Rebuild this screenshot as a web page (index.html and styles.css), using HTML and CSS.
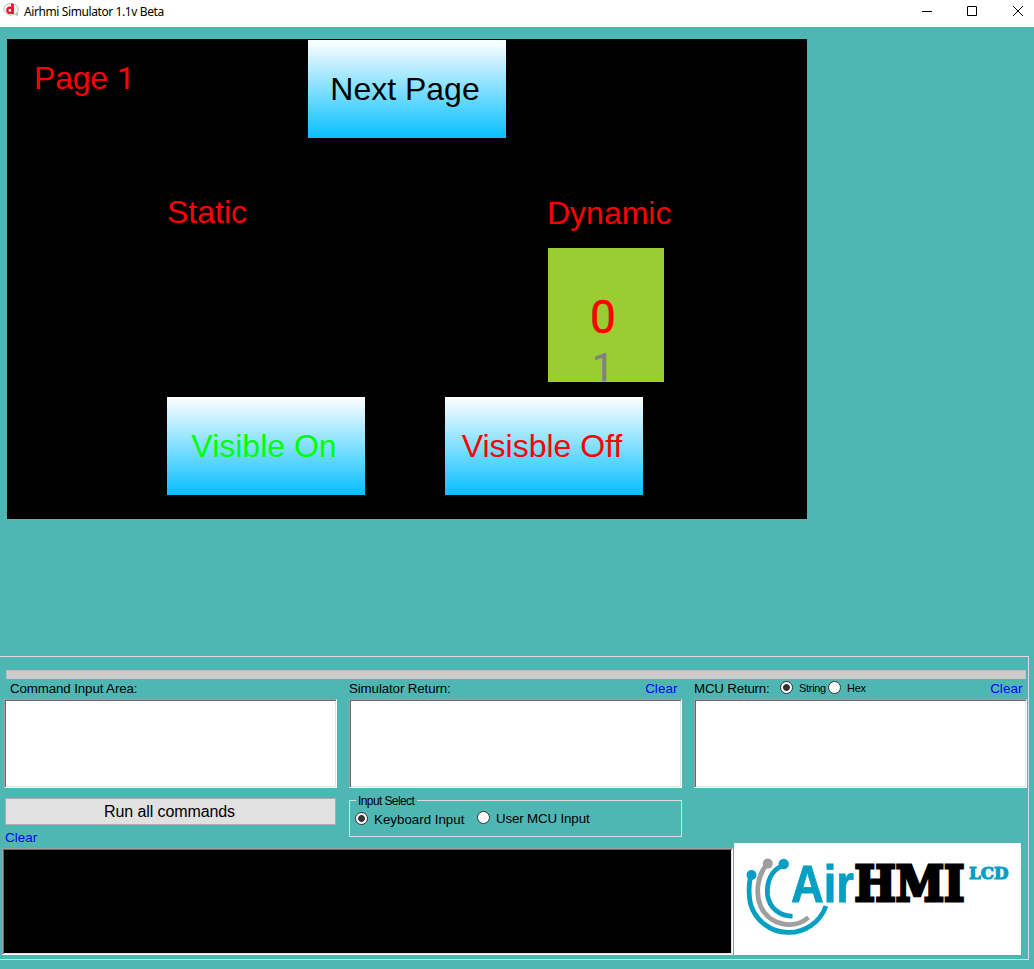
FILE: index.html
```html
<!DOCTYPE html>
<html lang="en">
<head>
<meta charset="utf-8">
<title>Airhmi Simulator 1.1v Beta</title>
<link rel="stylesheet" href="styles.css">
</head>
<body>
<header class="titlebar">
  <svg class="app-icon" viewBox="0 0 16 16" width="16" height="16"><path d="M12 12 15 14.500 14.500 10z" fill="#aaa"/><ellipse cx="8" cy="7.300" rx="7.300" ry="5.800" fill="#f4f4f4" stroke="#c0c0c0"/><path d="M9.700 2V12M8 2.800H10" stroke="#e3142a" stroke-width="2.400" fill="none"/><ellipse cx="7" cy="8.300" rx="2.700" ry="2.600" fill="none" stroke="#e3142a" stroke-width="2.200"/></svg>
  <span class="app-name">Airhmi Simulator 1.1v Beta</span>
  <div class="window-controls">
    <svg viewBox="0 0 12 12" width="12" height="12"><path d="M2 6.500h10" class="glyph"/></svg>
    <svg viewBox="0 0 12 12" width="12" height="12"><path d="M1.500 1.500h9v9h-9z" class="glyph"/></svg>
    <svg viewBox="0 0 12 12" width="12" height="12"><path d="M1 1l10 10M11 1 1 11" class="glyph"/></svg>
  </div>
</header>
<main>
  <section class="screen">
    <span class="label page-label">Page <span class="digit">1</span></span>
    <button class="hmi-button next">Next Page</button>
    <span class="label static-label">Static</span>
    <span class="label dynamic-label">Dynamic</span>
    <div class="picker"><span class="current">0</span><span class="following">1</span></div>
    <button class="hmi-button on">Visible On</button>
    <button class="hmi-button off">Visisble Off</button>
  </section>
  <section class="panel">
    <div class="progress"></div>
    <div class="columns">
      <div class="column">
        <div class="column-head command-head"><span>Command Input Area:</span></div>
        <div class="textbox"></div>
      </div>
      <div class="column">
        <div class="column-head"><span>Simulator Return:</span><a class="clear">Clear</a></div>
        <div class="textbox"></div>
      </div>
      <div class="column">
        <div class="column-head"><span class="mcu">MCU Return:</span><i class="radio checked"></i><span class="small string">String</span><i class="radio"></i><span class="small hex">Hex</span><a class="clear">Clear</a></div>
        <div class="textbox"></div>
      </div>
    </div>
    <div class="actions">
      <div class="run-area">
        <button class="run">Run all commands</button>
        <a class="clear console-clear">Clear</a>
      </div>
      <div class="input-select">
        <span class="legend">Input Select</span>
        <i class="radio checked"></i><span class="keyboard">Keyboard Input</span><i class="radio user-radio"></i><span class="user">User MCU Input</span>
      </div>
    </div>
    <div class="bottom">
      <div class="console"></div>
      <svg class="logo" viewBox="734 843 287 112" width="287" height="112">
        <g fill="none" stroke="#049fc3" stroke-width="4.800">
          <path d="M750.800 875Q747.500 890 750.500 904A39.700 39.700 0 0 0 826 906"/>
          <path d="M783 865.500C771 870 766.500 882 767.500 895A24 24 0 0 0 792.500 916"/>
          <path stroke="#a09f9e" d="M767 864C757 876 755.500 894 760.500 906A31 31 0 0 0 808.500 917.500"/>
        </g>
        <circle cx="751.500" cy="875" r="5" fill="#049fc3"/>
        <circle cx="767.800" cy="863.600" r="5" fill="#a09f9e"/>
        <circle cx="783.700" cy="864" r="5.200" fill="#049fc3"/>
        <text class="air" x="791" y="902" textLength="63" lengthAdjust="spacingAndGlyphs">Air</text>
        <text class="hmi" x="854.500" y="901" textLength="110" lengthAdjust="spacingAndGlyphs">HMI</text>
        <text class="lcd" x="969" y="879.300" textLength="39.500" lengthAdjust="spacingAndGlyphs">LCD</text>
      </svg>
    </div>
  </section>
</main>
</body>
</html>
```
FILE: styles.css
```css
* { box-sizing: border-box; }
body { margin: 0; width: 1034px; height: 969px; overflow: hidden; background: #4eb6b3; font: 13.33px/16px "Liberation Sans", Arial, sans-serif; color: #000; }
.titlebar { height: 27px; background: #fff; display: flex; align-items: flex-start; padding-left: 3px; }
.app-icon { margin-top: 2px; }
.app-name { margin: 4px 0 0 5px; font: 12px/16px "Noto Sans", sans-serif; letter-spacing: -0.4px; white-space: nowrap; }
.window-controls { margin: 5px 10px 0 auto; display: flex; gap: 34px; }
.glyph { fill: none; stroke: #000; stroke-width: 1; }
main { padding-top: 12px; }
button { font-family: inherit; padding: 0; }

.screen { position: relative; width: 800px; height: 480px; margin-left: 7px; background: #000; font-size: 32px; line-height: 36px; }
.label { position: absolute; color: #f00; white-space: nowrap; }
.page-label { left: 27px; top: 21px; letter-spacing: -0.2px; }
.digit { font-family: Roboto, sans-serif; }
.static-label { left: 160px; top: 155px; }
.dynamic-label { left: 540px; top: 156px; }
.hmi-button { position: absolute; width: 198px; height: 98px; border: 0; background: linear-gradient(#fff, #06bfff); font-size: 32px; line-height: 36px; white-space: nowrap; }
.next { left: 301px; top: 1px; padding-right: 4px; }
.on { left: 160px; top: 358px; color: #0f0; padding-right: 4px; }
.off { left: 438px; top: 358px; color: #f00; padding-right: 4px; }
.picker { position: absolute; left: 541px; top: 209px; width: 116px; height: 134px; overflow: hidden; background: #9acd32; }
.current, .following { position: absolute; left: 0; width: 110px; text-align: center; }
.current { top: 43px; color: #f00; font: 400 46px/52px Roboto, sans-serif; -webkit-text-stroke: 0.5px #f00; }
.following { top: 105px; color: #808080; font: 39px/30px Roboto, sans-serif; -webkit-text-stroke: 0.4px #808080; }

.panel { width: 1029px; height: 304px; margin-top: 137px; border: 1px solid #dcdcdc; border-left: 0; padding: 13px 0 0 4px; }
.progress { width: 1020px; height: 9px; margin-left: 2px; background: #ccc; border: 1px solid #bcbcbc; border-bottom: 0; border-right-color: #c4c4c4; }
.columns { display: flex; gap: 12px; }
.column { width: 333px; }
.column-head { height: 20px; display: flex; align-items: flex-start; padding-top: 2px; white-space: nowrap; letter-spacing: -0.12px; }
.command-head { padding-left: 6px; }
.clear { color: #00f; margin-left: auto; padding-right: 4.500px; letter-spacing: 0.1px; }
.textbox, .console { border: 1px solid; border-color: #a0a0a0 #fff #fff #a0a0a0; background: #fff; box-shadow: inset 1px 1px #696969, inset -1px -1px #e3e3e3; }
.textbox { height: 89px; }
.radio { flex: none; width: 13px; height: 13px; border: 1px solid #333; border-radius: 50%; background: #fff; }
.checked { background: radial-gradient(circle, #333 0 3px, #fff 3.800px); }
.small { font-size: 11px; letter-spacing: -0.3px; line-height: 14px; }
.mcu { width: 86px; letter-spacing: -0.2px; }
.string { width: 29px; margin: 0 0 0 6px; }
.hex { margin-left: 6px; }

.actions { display: flex; height: 60px; padding-top: 10px; }
.run-area { width: 345px; display: flex; flex-direction: column; align-items: flex-start; }
.run { width: 331px; height: 27px; margin: 0 0 5px 1px; padding-right: 2px; background: #e1e1e1; border: 1px solid #adadad; font-size: 16px; letter-spacing: -0.1px; color: #000; }
.console-clear { margin-left: 1px; }
.input-select { position: relative; width: 333px; height: 37px; margin-top: 2px; border: 1px solid #dcdcdc; display: flex; align-items: flex-start; padding: 11px 0 0 5px; white-space: nowrap; }
.legend { position: absolute; left: 6px; top: -7px; padding: 0 3px 0 2px; background: #4eb6b3; font-size: 12px; line-height: 14px; letter-spacing: -0.6px; }
.keyboard { width: 103px; margin: 0 0 0 6px; }
.user-radio { margin-top: -1px; }
.user { margin: -1px 0 0 6px; letter-spacing: -0.15px; }
.bottom { display: flex; align-items: flex-start; margin: -5px 0 0 -2px; }
.console { width: 731px; height: 107px; margin-top: 5px; background: #000; }
.logo { margin-left: 1px; background: #fff; }
.air { font: bold 51px "Liberation Sans", sans-serif; fill: #049fc3; stroke: #049fc3; stroke-width: 0.8; }
.hmi { font: bold 48px "DejaVu Serif", serif; fill: #000; stroke: #000; stroke-width: 3.2; }
.lcd { font: bold 17.500px "DejaVu Serif", serif; fill: #049fc3; stroke: #049fc3; stroke-width: 1.2; }
```
